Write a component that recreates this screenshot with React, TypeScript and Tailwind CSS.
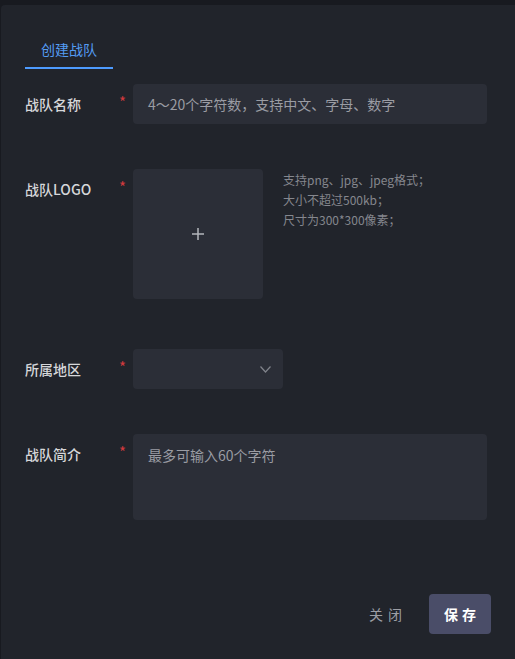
import React from 'react';

const Label = ({ text }: { text: string }) => (
  <div className="w-[108px] h-[40px] flex items-center justify-between pr-[7px] shrink-0">
    <span className="text-[14px] leading-[20px] font-medium text-[#d6d7da]">{text}</span>
    <span className="text-[15px] leading-none text-[#d23a3e] -mt-[5px]">*</span>
  </div>
);

export default function App() {
  return (
    <div className="min-h-screen bg-[#181a20] pt-[5px] pl-[1px] font-['Noto_Sans_CJK_SC','Noto_Sans',sans-serif]">
      <div className="h-[654px] bg-[#21242b] rounded-tl-[4px] flex flex-col px-[24px]">
        {/* Tab header */}
        <div className="pt-[34px] flex">
          <div className="w-[88px] text-center text-[14px] leading-[20px] text-[#549cf3] pb-[8px] border-b-2 border-[#4d9bff]">
            创建战队
          </div>
        </div>

        {/* Team name */}
        <div className="flex items-start mt-[15px]">
          <Label text="战队名称" />
          <div className="w-[354px] h-[40px] rounded-[4px] bg-[#2b2e37] px-[15px] flex items-center text-[14px] text-[#9a9ca3]">
            4～20个字符数，支持中文、字母、数字
          </div>
        </div>

        {/* Logo */}
        <div className="flex items-start mt-[45px]">
          <Label text="战队LOGO" />
          <div className="w-[130px] h-[130px] rounded-[4px] bg-[#2b2e37] flex items-center justify-center shrink-0">
            <svg width="12" height="12" viewBox="0 0 12 12" fill="none" stroke="#b4b6bc" strokeWidth="1.5">
              <path d="M6 0v12M0 6h12" />
            </svg>
          </div>
          <div className="ml-[20px] mt-[1px] text-[12px] leading-[20px] text-[#85878e]">
            <div>支持png、jpg、jpeg格式；</div>
            <div>大小不超过500kb；</div>
            <div>尺寸为300*300像素；</div>
          </div>
        </div>

        {/* Region */}
        <div className="flex items-start mt-[50px]">
          <Label text="所属地区" />
          <div className="w-[150px] h-[40px] rounded-[4px] bg-[#2b2e37] flex items-center justify-end pr-[12px]">
            <svg width="11" height="7" viewBox="0 0 11 7" fill="none" stroke="#80838b" strokeWidth="1.2">
              <path d="M0.5 0.5l5 5.5l5-5.5" />
            </svg>
          </div>
        </div>

        {/* Intro */}
        <div className="flex items-start mt-[45px]">
          <Label text="战队简介" />
          <div className="w-[354px] h-[86px] rounded-[4px] bg-[#2b2e37] px-[15px] pt-[11px] text-[14px] leading-[20px] text-[#9a9ca3]">
            最多可输入60个字符
          </div>
        </div>

        {/* Footer */}
        <div className="flex justify-end items-center gap-[22px] mt-[74px]">
          <button className="text-[14px] text-[#9c9ea5] tracking-[5px]">关闭</button>
          <button className="w-[62px] h-[40px] rounded-[4px] bg-[#4a4d68] text-[14px] font-bold text-white tracking-[4px] pl-[4px]">
            保存
          </button>
        </div>
      </div>
    </div>
  );
}
